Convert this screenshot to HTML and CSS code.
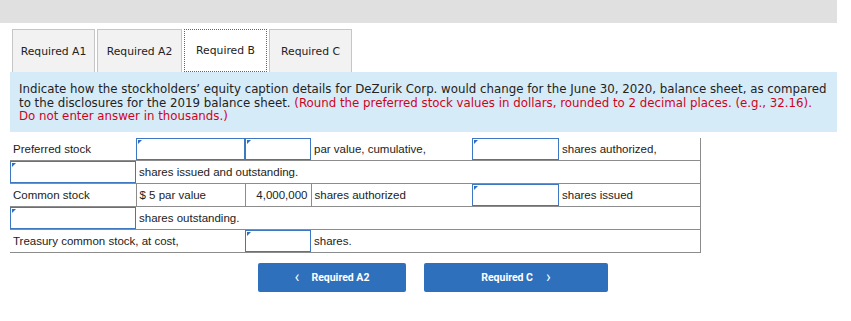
FILE: index.html
```html
<!DOCTYPE html>
<html lang="en">
<head>
    <meta charset="UTF-8">
    <title>Required B</title>
    <link rel="stylesheet" href="styles.css">
</head>
<body>
    <div class="top-bar"></div>

    <div class="page">
        <div class="tabs">
            <div class="tab">Required A1</div>
            <div class="tab">Required A2</div>
            <div class="tab active">Required B</div>
            <div class="tab">Required C</div>
        </div>

        <div class="info-box">
            Indicate how the stockholders’ equity caption details for DeZurik Corp. would change for the June 30, 2020, balance sheet, as compared<br>
            to the disclosures for the 2019 balance sheet. <span class="note">(Round the preferred stock values in dollars, rounded to 2 decimal places. (e.g., 32.16).<br>
            Do not enter answer in thousands.)</span>
        </div>

        <table class="equity">
            <colgroup>
                <col class="c1"><col class="c2"><col class="c3"><col class="c4"><col class="c5"><col class="c6">
            </colgroup>
            <tr>
                <td>Preferred stock</td>
                <td class="in"><span class="field"><input type="text"></span></td>
                <td class="in"><span class="field"><input type="text"></span></td>
                <td>par value, cumulative,</td>
                <td class="in"><span class="field"><input type="text"></span></td>
                <td>shares authorized,</td>
            </tr>
            <tr>
                <td class="in"><span class="field"><input type="text"></span></td>
                <td colspan="5">shares issued and outstanding.</td>
            </tr>
            <tr>
                <td>Common stock</td>
                <td class="line">$ 5 par value</td>
                <td class="line num">4,000,000</td>
                <td class="line">shares authorized</td>
                <td class="in"><span class="field"><input type="text"></span></td>
                <td>shares issued</td>
            </tr>
            <tr>
                <td class="in"><span class="field"><input type="text"></span></td>
                <td colspan="5">shares outstanding.</td>
            </tr>
            <tr>
                <td colspan="2">Treasury common stock, at cost,</td>
                <td class="in"><span class="field"><input type="text"></span></td>
                <td colspan="3">shares.</td>
            </tr>
        </table>

        <div class="nav">
            <button class="nav-btn prev"><span class="chev">&lsaquo;</span>Required A2</button>
            <button class="nav-btn next">Required C<span class="chev">&rsaquo;</span></button>
        </div>
    </div>
</body>
</html>
```

FILE: styles.css
```css
body {
    margin: 0;
    padding: 0;
    background-color: white;
    font-family: "DejaVu Sans", Verdana, sans-serif;
    color: #222;
}
.top-bar {
    width: 837px;
    height: 23px;
    background-color: #e0e0e0;
}
.page {
    width: 827px;
    margin-left: 10px;
}
.tabs {
    display: flex;
    gap: 2px;
    margin-top: 6px;
    padding-left: 2px;
}
.tab {
    box-sizing: border-box;
    width: 83px;
    height: 43px;
    display: flex;
    align-items: center;
    justify-content: center;
    background-color: #f2f2f2;
    border: 1px solid #c6c6c6;
    border-bottom: none;
    font-size: 10.8px;
    color: #222;
}
.tab:nth-child(2) {
    width: 85px;
}
.tab.active {
    background-color: white;
    border: 1px dotted #2f6dbb;
}
.info-box {
    box-sizing: border-box;
    height: 60px;
    background-color: #d6ebf8;
    padding: 11px 9px 0;
    font-size: 11.8px;
    line-height: 13.5px;
    color: #222;
    white-space: nowrap;
}
.note {
    color: #d0021b;
}
.equity {
    margin-top: 6px;
    border-collapse: collapse;
    table-layout: fixed;
    width: 690px;
    font-family: Arial, "Liberation Sans", sans-serif;
    font-size: 11.5px;
    color: #222;
}
.c1 { width: 126px; }
.c2 { width: 109px; }
.c3 { width: 66px; }
.c4 { width: 161px; }
.c5 { width: 87px; }
.c6 { width: 141px; }
.equity tr {
    height: 22px;
    border-bottom: 1px solid #8c8c8c;
}
.equity td {
    padding: 0 3px;
    height: 22px;
    white-space: nowrap;
    overflow: hidden;
}
.equity td:last-child {
    border-right: 1px solid #8c8c8c;
}
.equity td.in {
    padding: 0;
}
.equity td.line {
    border-left: 1px solid #8c8c8c;
}
.equity td.num {
    text-align: right;
}
.field {
    position: relative;
    display: block;
    height: 22px;
}
.field::before {
    content: "";
    position: absolute;
    top: 2px;
    left: 2px;
    border-top: 4px solid #2f6dbb;
    border-right: 4px solid transparent;
}
.field input {
    box-sizing: border-box;
    display: block;
    width: 100%;
    height: 22px;
    margin: 0;
    border: 1.5px solid #3f78c2;
    background: white;
    outline: none;
}
.nav {
    display: flex;
    gap: 18px;
    margin-top: 10px;
    padding-left: 248px;
}
.nav-btn {
    box-sizing: border-box;
    height: 29px;
    border: none;
    border-radius: 2px;
    background-color: #2f70bd;
    color: white;
    font-family: Roboto, Arial, sans-serif;
    font-size: 10.5px;
    font-weight: bold;
    cursor: pointer;
    display: flex;
    align-items: center;
    justify-content: center;
}
.nav-btn.prev {
    width: 148px;
}
.nav-btn.next {
    width: 184px;
}
.chev {
    font-size: 16px;
    font-weight: normal;
    line-height: 1;
    margin-top: -2px;
}
.prev .chev {
    margin-right: 12px;
}
.next .chev {
    margin-left: 13px;
}
```
